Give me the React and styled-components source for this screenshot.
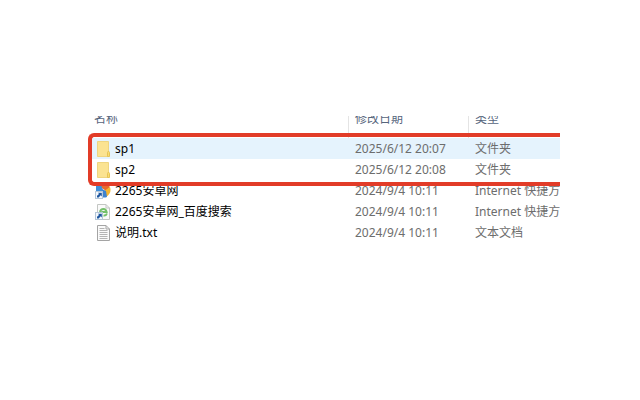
import React from "react";
import styled, { createGlobalStyle } from "styled-components";

const files = [
  { name: "sp1", date: "2025/6/12 20:07", type: "文件夹", icon: "folder", selected: true },
  { name: "sp2", date: "2025/6/12 20:08", type: "文件夹", icon: "folder" },
  { name: "2265安卓网", date: "2024/9/4 10:11", type: "Internet 快捷方式", icon: "site" },
  { name: "2265安卓网_百度搜索", date: "2024/9/4 10:11", type: "Internet 快捷方式", icon: "link" },
  { name: "说明.txt", date: "2024/9/4 10:11", type: "文本文档", icon: "text" },
];

export default function App() {
  return (
    <>
      <GlobalStyle />
      <Page>
        <FileList>
          <Table>
            <thead>
              <tr>
                <NameHeading scope="col">名称</NameHeading>
                <DateHeading scope="col">修改日期</DateHeading>
                <TypeHeading scope="col">类型</TypeHeading>
              </tr>
            </thead>
            <tbody>
              {files.map((file) => (
                <Row key={file.name} $selected={file.selected}>
                  <NameCell>
                    <FileName>
                      <FileIcon kind={file.icon} />
                      {file.name}
                    </FileName>
                  </NameCell>
                  <Cell>{file.date}</Cell>
                  <Cell>{file.type}</Cell>
                </Row>
              ))}
            </tbody>
          </Table>
          <Highlight />
        </FileList>
      </Page>
    </>
  );
}

function ShortcutArrow() {
  return (
    <>
      <rect x="0.5" y="8.5" width="7" height="7" fill="#f4f8fc" stroke="#b4c6d8" />
      <path d="M2 14.5V12.8L4 10.9L3 9.8H6.8V13.4L5.6 12.3L3.8 14.5Z" fill="#1f57a0" />
    </>
  );
}

function FileIcon({ kind }) {
  if (kind === "folder") {
    return (
      <Icon viewBox="0 0 16 16" aria-hidden="true">
        <path d="M2.5 0.5H13.5V15.5H2.5Z" fill="#fbe391" stroke="#efd57f" />
        <path d="M12.5 15.5V11.5L13.5 10L14.5 11.5V15.5Z" fill="#f9dc70" stroke="#e6c456" />
      </Icon>
    );
  }
  if (kind === "site") {
    return (
      <Icon viewBox="0 0 16 16" aria-hidden="true">
        <path d="M1 2Q5 0 8 3L7 9H1Z" fill="#3f8fd9" />
        <path d="M6 1Q11 -1 15 4L11 8L7 5Z" fill="#e86a2c" />
        <path d="M15 4Q17 10 11 14L9 8Z" fill="#f3b52f" />
        <path d="M7 6L11 8L12 14Q9 15 7 14Z" fill="#3e83cf" />
        <ShortcutArrow />
      </Icon>
    );
  }
  if (kind === "link") {
    return (
      <Icon viewBox="0 0 16 16" aria-hidden="true">
        <path d="M2.5 0.5H11L14.5 4V15.5H2.5Z" fill="#fafafa" stroke="#c3c6c3" />
        <path d="M11 0.5V4H14.5" fill="none" stroke="#c3c6c3" />
        <path d="M5 8Q5.5 5 8.5 5Q11 5 11.6 8H6.5" fill="none" stroke="#74c06a" strokeWidth="2" />
        <path d="M12 9.5Q11 12 8.5 11.5" fill="none" stroke="#74c06a" strokeWidth="2" />
        <ShortcutArrow />
      </Icon>
    );
  }
  return (
    <Icon viewBox="0 0 16 16" aria-hidden="true">
      <path d="M2.5 0.5H11L14.5 4V15.5H2.5Z" fill="#fafafa" stroke="#a4a4a4" />
      <path d="M11 0.5V4H14.5" fill="none" stroke="#a4a4a4" />
      <path d="M4.5 3.5H9.5M4.5 5.5H12.5M4.5 7.5H12.5M4.5 9.5H12.5M4.5 11.5H12.5M4.5 13.5H12.5" stroke="#b4b4b4" />
    </Icon>
  );
}

const GlobalStyle = createGlobalStyle`
  body {
    margin: 0;
    background: #fff;
    font-family: "Noto Sans", "Noto Sans CJK SC", sans-serif;
    font-size: 12px;
  }
`;

const Page = styled.main`
  padding: 116px 80px;
`;

const FileList = styled.div`
  position: relative;
  padding-left: 12px;
  overflow: hidden;
`;

const Table = styled.table`
  width: 100%;
  margin-top: -12px;
  border-collapse: separate;
  border-spacing: 0;
  table-layout: fixed;
`;

const Heading = styled.th`
  box-sizing: border-box;
  height: 34px;
  padding: 0 0 4px 6px;
  border-left: 1px solid #e4e4e4;
  color: #56657c;
  font-weight: 400;
  line-height: 20px;
  text-align: left;
`;

const NameHeading = styled(Heading)`
  padding-left: 2px;
  border-left: none;
`;

const DateHeading = styled(Heading)`
  width: 120px;
`;

const TypeHeading = styled(Heading)`
  width: 92px;
`;

const Row = styled.tr`
  background-color: ${(props) => (props.$selected ? "#e5f3fd" : "transparent")};
`;

const Cell = styled.td`
  height: 21px;
  padding: 0 0 0 7px;
  overflow: hidden;
  color: #6d6d6d;
  line-height: 21px;
  white-space: nowrap;
`;

const NameCell = styled(Cell)`
  padding-left: 3px;
  color: #000;
`;

const FileName = styled.span`
  display: flex;
  align-items: center;
  gap: 4px;
  height: 21px;
`;

const Icon = styled.svg`
  flex: none;
  width: 16px;
  height: 16px;
`;

const Highlight = styled.div`
  position: absolute;
  top: 17px;
  right: 0;
  left: 8px;
  box-sizing: border-box;
  height: 53px;
  border: 4px solid #e23c28;
  border-right: none;
  border-radius: 6px 0 0 6px;
`;
